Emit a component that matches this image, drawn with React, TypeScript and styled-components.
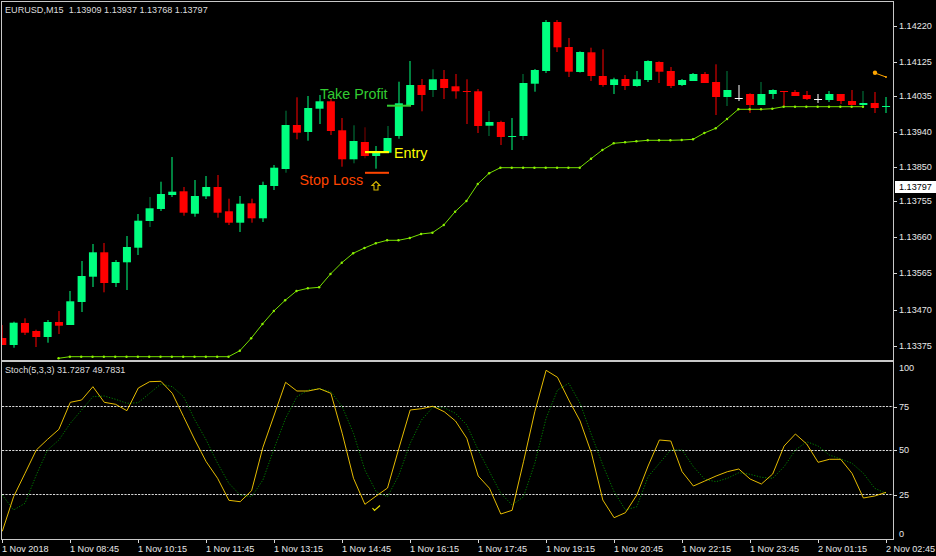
import styled, { createGlobalStyle } from "styled-components";

const GlobalStyle = createGlobalStyle`
  html, body {
    margin: 0;
    background: #000;
  }
`;

const Page = styled.div`
  width: 936px;
  height: 556px;
  box-sizing: border-box;
  padding: 1px 0 0 1px;
  background: #000;
  overflow: hidden;
  display: grid;
  grid-template-columns: 893px 1fr;
  grid-template-rows: 359px 180px 1fr;
  color: #e8e8e8;
  font-family: "Liberation Sans", Arial, sans-serif;
  font-size: 9.1px;
  line-height: 12px;
`;

const Pane = styled.div<{ $main?: boolean }>`
  position: relative;
  box-sizing: border-box;
  border: 1px solid #c8c8c8;
  border-top-width: ${(p) => (p.$main ? "1px" : "2px")};
  border-bottom-width: ${(p) => (p.$main ? "0" : "1px")};
`;

const Plot = styled.svg`
  display: block;
  width: 100%;
  height: 100%;
`;

const PaneTitle = styled.div`
  position: absolute;
  left: 3px;
  top: 2px;
  white-space: pre;
  color: #dcdcdc;
`;

const Annotation = styled.div<{ $left: number; $top: number; $color: string }>`
  position: absolute;
  left: ${(p) => p.$left}px;
  top: ${(p) => p.$top}px;
  color: ${(p) => p.$color};
  font-size: 14.3px;
  line-height: 16px;
  white-space: nowrap;
`;

const Axis = styled.div<{ $offset: number }>`
  padding-top: ${(p) => p.$offset}px;
  position: relative;
`;

const AxisRow = styled.div<{ $height: number }>`
  height: ${(p) => p.$height}px;
  display: flex;
  align-items: flex-start;
`;

const AxisTick = styled.i<{ $hidden?: boolean }>`
  width: 3px;
  height: 1px;
  margin-top: 6px;
  margin-right: 2px;
  background: ${(p) => (p.$hidden ? "transparent" : "#d8d8d8")};
`;

const PriceTag = styled.div`
  position: absolute;
  left: 1px;
  top: 180px;
  width: 41px;
  box-sizing: border-box;
  padding-left: 4px;
  background: #fff;
  color: #000;
`;

const TimeAxis = styled.div`
  grid-column: 1 / 3;
  display: flex;
  padding-left: 1px;
`;

const TimeCell = styled.div`
  flex: 0 0 68px;
  white-space: nowrap;
  &::before {
    content: "";
    display: block;
    width: 1px;
    height: 3px;
    background: #d8d8d8;
  }
`;

// page coordinates, read off the chart candle by candle: high, open/close top, bottom, low
type Candle = [number, number, number, number, "g" | "r" | "w"];

const candles: Candle[] = [
  [325, 338, 345, 345, "r"], [321.7, 322.7, 345, 347.7, "g"], [318.3, 323, 332.7, 335, "r"], [329.7, 331, 337, 347, "r"],
  [320, 322, 337, 342.7, "g"], [311, 322, 325.7, 334, "r"], [291, 301.3, 325, 325, "g"], [261, 276, 302, 312, "g"],
  [244, 252.3, 276.7, 287, "g"], [243, 252.3, 283, 292.3, "r"], [260, 262, 283, 287, "g"], [236, 247, 262.3, 290, "g"],
  [214, 220.7, 247.7, 255, "g"], [197, 208.3, 221, 227, "g"], [181.7, 194, 209, 211, "g"], [157, 191.7, 195, 197, "g"],
  [187, 191.3, 212.7, 215.7, "r"], [180, 196, 213.7, 216.7, "g"], [176, 187, 196.3, 199, "g"], [175, 187, 212.7, 217.7, "r"],
  [198.7, 211.3, 222.7, 225, "r"], [196, 203.7, 222.7, 232, "g"], [198.7, 203.3, 218.3, 222.7, "r"], [181.7, 185, 218.3, 222, "g"],
  [165, 167.7, 186, 190, "g"], [110.7, 125, 169, 172.7, "g"], [97.3, 125, 132.7, 139.3, "r"], [96, 108, 132, 140.7, "g"],
  [95, 101.3, 108.7, 124, "g"], [98, 101.3, 131, 135, "r"], [118, 130.3, 159.3, 166.7, "r"], [125.3, 141, 159.3, 163.3, "g"],
  [127.3, 142, 156, 158.3, "r"], [146, 152, 156, 168.7, "g"], [126, 138, 152.7, 153, "g"], [81.7, 103.3, 136, 138.7, "g"],
  [61, 85, 105, 106, "g"], [79, 85, 95, 111.3, "r"], [69.3, 79.3, 90, 97, "g"], [70, 79, 88, 99, "r"],
  [74, 86.3, 91.3, 98.7, "r"], [79.3, 91, 92, 124, "r"], [89, 91.3, 126, 133, "r"], [111, 122, 125.7, 136, "g"],
  [120.7, 122, 137, 145, "r"], [118, 136, 137, 150, "g"], [74, 83, 136, 140, "g"], [69, 70, 83.7, 91.7, "g"],
  [20, 22, 71, 73, "g"], [20, 22, 47.3, 52, "r"], [38, 47, 71.7, 77, "r"], [51.3, 52, 72, 72.5, "g"],
  [47.7, 52.3, 76, 81, "r"], [49.3, 76, 85, 86.7, "r"], [77.7, 79.3, 85, 94, "g"], [75, 79, 86, 90, "r"],
  [71, 79.3, 86, 86.7, "g"], [60.3, 61, 80, 82, "g"], [61.3, 62, 71.7, 83, "r"], [67, 71, 86, 88, "r"],
  [79, 80, 85, 86, "g"], [73, 74, 81, 81, "g"], [72, 74, 83, 83, "r"], [64.3, 82, 97, 115, "r"],
  [71, 90, 97, 106, "g"], [85, 98, 99, 101, "w"], [93.3, 94, 105, 113, "r"], [82, 94, 105, 105, "g"],
  [89.3, 90, 94, 99, "g"], [91, 91, 92, 106.7, "r"], [90, 92, 96, 96, "r"], [91, 95, 99, 100, "r"],
  [94, 99, 100, 103, "w"], [91, 94, 100, 102, "g"], [94, 94, 101, 104, "r"], [90, 101, 105, 105, "r"],
  [91, 103, 105, 106, "g"], [92, 103, 108, 113, "r"], [97, 106, 107, 113, "g"],
];

const candleColor = { g: "#00ff7f", r: "#ff0000", w: "#ffffff" };
const softWicks = new Set([13, 25, 31, 32, 34, 38, 43, 46, 64, 67, 76]);

const barX = (i: number) => 2.3 + i * 11.33;

// trailing stop, starts at bar 5
const trail = [
  358.3, ...Array(15).fill(356.7), 350.7, 338.3, 324, 311, 300.3, 291, 288.3, 287.3, 274, 262.7, 253.3, 248, 243.3, 240.3,
  240.3, 238, 234, 232.7, 225, 211.7, 201, 184, 173.3, ...Array(8).fill(167.7), 158.7, 150, 143.3, 142.3, 141.3, 140.3,
  140.3, 140.3, 140, 139.3, 133, 128.3, 119, 109.3, 109.3, 109.3, 108.7, ...Array(8).fill(106.7),
];

// stochastic lines, sampled at 3x from y=360
const mainLine = [
  514, 410, 340, 270, 238, 208, 127, 120, 80, 127, 133, 152, 84, 65, 64, 100, 170, 240, 305, 355, 421, 425, 392, 262, 165,
  67, 93, 93, 86, 100, 220, 355, 433, 408, 384, 265, 150, 146, 139, 155, 183, 235, 348, 385, 462, 451, 305, 155, 31, 52,
  120, 183, 280, 420, 473, 458, 405, 318, 240, 243, 335, 378, 363, 348, 335, 327, 357, 372, 342, 258, 222, 252, 307, 298,
  298, 340, 414, 408, 397,
];

const signalLine = [
  405, 450, 430, 345, 270, 240, 190, 150, 110, 108, 118, 130, 128, 100, 72, 80, 110, 180, 240, 310, 370, 405, 410, 360, 265,
  175, 110, 90, 86, 95, 140, 220, 330, 395, 410, 345, 250, 180, 142, 143, 160, 195, 270, 335, 400, 435, 410, 310, 175, 90,
  70, 130, 225, 315, 395, 450, 440, 350, 310, 270, 270, 320, 358, 365, 355, 338, 343, 352, 355, 320, 270, 245, 258, 285,
  297, 310, 340, 385, 400,
];

const toPoints = (values: number[]) => values.map((v, i) => `${barX(i).toFixed(1)},${(360 + v / 3).toFixed(1)}`).join(" ");

const priceRows = [
  ["1.14220", 35.7], ["1.14125", 34.6], ["1.14035", 35.4], ["1.13940", 35], ["1.13850", 34.8],
  ["1.13755", 35.5], ["1.13660", 36.5], ["1.13565", 36.5], ["1.13470", 36], ["1.13375", 12],
] as const;

const stochRows = [
  ["100", 39, true], ["75", 43.5, false], ["50", 44.5, false], ["25", 39, false], ["0", 12, true],
] as const;

const timeLabels = [
  "1 Nov 2018", "1 Nov 08:45", "1 Nov 10:15", "1 Nov 11:45", "1 Nov 13:15", "1 Nov 14:45", "1 Nov 16:15",
  "1 Nov 17:45", "1 Nov 19:15", "1 Nov 20:45", "1 Nov 22:15", "1 Nov 23:45", "2 Nov 01:15", "2 Nov 02:45",
];

const PriceChart = () => (
  <Plot viewBox="2 2 891 358">
    {candles.map(([high, top, bottom, low, kind], i) => {
      const x = barX(i);
      return (
        <g key={i} fill={candleColor[kind]}>
          <rect
            x={Math.round(x) - 0.5}
            y={high}
            width={1}
            height={low - high}
            opacity={softWicks.has(i) ? 0.5 : 1}
          />
          <rect x={x - 4} y={top} width={8} height={Math.max(bottom - top, 1)} />
        </g>
      );
    })}
    <polyline
      points={trail.map((y, i) => `${barX(i + 5) - 0.4},${y}`).join(" ")}
      fill="none"
      stroke="#76e000"
      strokeWidth={1}
    />
    {trail.map((y, i) => (
      <circle key={i} cx={barX(i + 5) - 0.4} cy={y} r={1.2} fill="#8cf000" />
    ))}
    <rect x={387} y={104.7} width={24} height={2} fill="#32cd32" />
    <rect x={365} y={151} width={24} height={2.2} fill="#ffff00" />
    <rect x={365} y={171.8} width={24} height={2} fill="#ff4500" />
    <path d="M376 181.5 L380 185.5 H378 V190 H374 V185.5 H372 Z" fill="none" stroke="#d8b800" strokeWidth={1.1} />
    <path d="M875 73 L886 77" stroke="#ffa500" strokeWidth={1} />
    <circle cx={875} cy={72.7} r={2.2} fill="#ffa500" />
    <circle cx={886} cy={77} r={1} fill="#ffa500" />
  </Plot>
);

const StochChart = () => (
  <Plot viewBox="2 362 891 177">
    {[406.5, 450.5, 494.5].map((y) => (
      <line key={y} x1={2} x2={893} y1={y} y2={y} stroke="#d8d8d8" strokeWidth={1} strokeDasharray="2.2 1.2" />
    ))}
    <polyline points={toPoints(signalLine)} fill="none" stroke="#008000" strokeWidth={1} strokeDasharray="1.2 1.6" />
    <polyline points={toPoints(mainLine)} fill="none" stroke="#ffd000" strokeWidth={0.9} />
    <path d="M372.5 508 L374.5 510.5 L380 505.5" fill="none" stroke="#e8e000" strokeWidth={1.2} />
  </Plot>
);

export default function App() {
  return (
    <Page>
      <GlobalStyle />
      <Pane $main>
        <PriceChart />
        <PaneTitle>EURUSD,M15  1.13909 1.13937 1.13768 1.13797</PaneTitle>
        <Annotation $left={318} $top={83.5} $color="#32cd32">Take Profit</Annotation>
        <Annotation $left={392} $top={142.5} $color="#ffff00">Entry</Annotation>
        <Annotation $left={297.5} $top={170} $color="#ff4500">Stop Loss</Annotation>
      </Pane>
      <Axis $offset={19}>
        {priceRows.map(([label, height]) => (
          <AxisRow key={label} $height={height}>
            <AxisTick />
            {label}
          </AxisRow>
        ))}
        <PriceTag>1.13797</PriceTag>
      </Axis>
      <Pane>
        <StochChart />
        <PaneTitle>Stoch(5,3,3) 31.7287 49.7831</PaneTitle>
      </Pane>
      <Axis $offset={1.5}>
        {stochRows.map(([label, height, hidden]) => (
          <AxisRow key={label} $height={height}>
            <AxisTick $hidden={hidden} />
            {label}
          </AxisRow>
        ))}
      </Axis>
      <TimeAxis>
        {timeLabels.map((label) => (
          <TimeCell key={label}>{label}</TimeCell>
        ))}
      </TimeAxis>
    </Page>
  );
}
